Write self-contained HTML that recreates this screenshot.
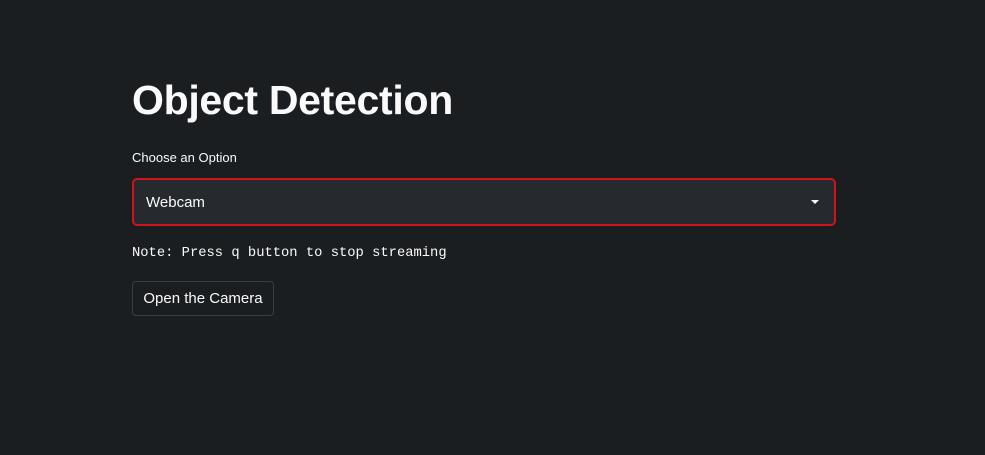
<!DOCTYPE html>
<html><head><style>
body{margin:0;width:985px;height:455px;background:#1b1e21;font-family:"Liberation Sans",sans-serif;color:#fafafa;overflow:hidden;position:relative}
h1{position:absolute;left:132px;top:74px;margin:0;font-size:41px;font-weight:bold;letter-spacing:-0.3px;line-height:52px}
.lbl{position:absolute;left:132px;top:150px;font-size:13px}
.sel{position:absolute;left:132px;top:178px;width:700px;height:44px;background:#262a2e;border:2px solid #d0141a;border-radius:5px}
.sel span{position:absolute;left:12px;top:14px;font-size:15px}
.arr{position:absolute;left:677px;top:20px;width:0;height:0;border-left:4px solid transparent;border-right:4px solid transparent;border-top:4px solid #fff}
.note{position:absolute;left:132px;top:246px;font-family:"Liberation Mono",monospace;font-size:13.8px}
.btn{position:absolute;left:132px;top:281px;width:140px;height:33px;border:1px solid #3a3e44;border-radius:4px;font-size:15px;line-height:33px;text-align:center}
</style></head><body>
<h1>Object Detection</h1>
<div class="lbl">Choose an Option</div>
<div class="sel"><span>Webcam</span><div class="arr"></div></div>
<div class="note">Note: Press q button to stop streaming</div>
<div class="btn">Open the Camera</div>
</body></html>
